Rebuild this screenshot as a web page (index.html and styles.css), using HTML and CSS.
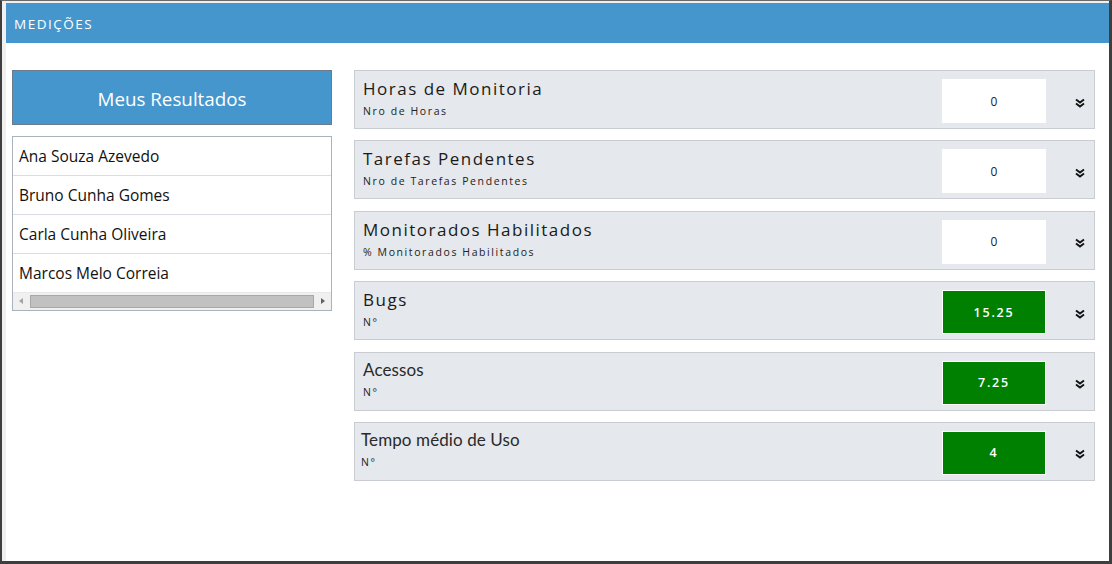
FILE: index.html
```html
<!DOCTYPE html>
<html lang="pt">
<head>
<meta charset="utf-8">
<title>Medições</title>
<link rel="stylesheet" href="styles.css">
</head>
<body>
<div class="window">
  <div class="app">
    <header class="topbar">MEDIÇÕES</header>
    <main class="content">
      <aside class="side">
        <div class="side-title">Meus Resultados</div>
        <div class="list">
          <div class="item">Ana Souza Azevedo</div>
          <div class="item">Bruno Cunha Gomes</div>
          <div class="item">Carla Cunha Oliveira</div>
          <div class="item last">Marcos Melo Correia</div>
          <div class="hscroll">
            <span class="arrow left"></span>
            <span class="track"><span class="thumb"></span></span>
            <span class="arrow right"></span>
          </div>
        </div>
      </aside>
      <section class="cards">
        <div class="card">
          <div class="info"><div class="title">Horas de Monitoria</div><div class="sub">Nro de Horas</div></div>
          <div class="value">0</div>
          <svg class="chev" viewBox="0 0 10 10"><path d="M1 1.5 L5 4.5 L9 1.5 M1 5.5 L5 8.5 L9 5.5"/></svg>
        </div>
        <div class="card">
          <div class="info"><div class="title">Tarefas Pendentes</div><div class="sub">Nro de Tarefas Pendentes</div></div>
          <div class="value">0</div>
          <svg class="chev" viewBox="0 0 10 10"><path d="M1 1.5 L5 4.5 L9 1.5 M1 5.5 L5 8.5 L9 5.5"/></svg>
        </div>
        <div class="card">
          <div class="info"><div class="title">Monitorados Habilitados</div><div class="sub">% Monitorados Habilitados</div></div>
          <div class="value">0</div>
          <svg class="chev" viewBox="0 0 10 10"><path d="M1 1.5 L5 4.5 L9 1.5 M1 5.5 L5 8.5 L9 5.5"/></svg>
        </div>
        <div class="card">
          <div class="info"><div class="title">Bugs</div><div class="sub">N°</div></div>
          <div class="value good">15.25</div>
          <svg class="chev" viewBox="0 0 10 10"><path d="M1 1.5 L5 4.5 L9 1.5 M1 5.5 L5 8.5 L9 5.5"/></svg>
        </div>
        <div class="card">
          <div class="info"><div class="title alt">Acessos</div><div class="sub">N°</div></div>
          <div class="value good">7.25</div>
          <svg class="chev" viewBox="0 0 10 10"><path d="M1 1.5 L5 4.5 L9 1.5 M1 5.5 L5 8.5 L9 5.5"/></svg>
        </div>
        <div class="card">
          <div class="info shift"><div class="title alt">Tempo médio de Uso</div><div class="sub">N°</div></div>
          <div class="value good">4</div>
          <svg class="chev" viewBox="0 0 10 10"><path d="M1 1.5 L5 4.5 L9 1.5 M1 5.5 L5 8.5 L9 5.5"/></svg>
        </div>
      </section>
    </main>
  </div>
</div>
</body>
</html>
```

FILE: styles.css
```css
* { box-sizing: border-box; }
html, body { margin: 0; padding: 0; }
body {
  font-family: "Open Sans", "Noto Sans", sans-serif;
  background: #ffffff;
  width: 1112px;
  height: 564px;
  overflow: hidden;
}
.window {
  width: 1112px;
  height: 564px;
  border-left: 2px solid #3e3e3e;
  border-top: 1px solid #6a6a6a;
  border-right: 3px solid #3e3e3e;
  border-bottom: 3px solid #3e3e3e;
  background: #f0f0f0;
  padding: 2px 0 0 4px;
}
.app {
  background: #ffffff;
  height: 100%;
  display: flex;
  flex-direction: column;
}
.topbar {
  height: 40px;
  background: #4596cd;
  color: #ffffff;
  font-size: 13.5px;
  letter-spacing: 1.5px;
  padding-left: 8px;
  display: flex;
  align-items: center;
  padding-top: 2px;
}
.content {
  display: flex;
  gap: 22px;
  padding: 27px 14px 0 6px;
}
.side { width: 320px; flex: none; }
.side-title {
  height: 55px;
  background: #4596cd;
  border: 1px solid #6b7c8c;
  color: #ffffff;
  font-size: 18.8px;
  display: flex;
  align-items: center;
  justify-content: center;
  padding-top: 2px;
}
.list {
  margin-top: 11px;
  border: 1px solid #a9b3bd;
  background: #ffffff;
}
.item {
  height: 39px;
  border-bottom: 1px solid #d9dde2;
  font-size: 15.5px;
  color: #111111;
  padding-left: 6px;
  display: flex;
  align-items: center;
}
.item.last { border-bottom: 1px solid #e8e8e8; }
.hscroll {
  height: 17px;
  display: flex;
  align-items: center;
  background: #f0f0f0;
}
.arrow { width: 17px; height: 17px; position: relative; flex: none; }
.arrow.left::after, .arrow.right::after {
  content: "";
  position: absolute;
  top: 5px;
  border-top: 3.5px solid transparent;
  border-bottom: 3.5px solid transparent;
}
.arrow.left::after { left: 6px; border-right: 4px solid #a3a3a3; }
.arrow.right::after { left: 7px; border-left: 4px solid #606060; }
.track { flex: 1; height: 17px; display: flex; align-items: center; }
.thumb {
  display: block;
  width: 100%;
  height: 13px;
  background: #c1c1c1;
  border: 1px solid #a8a8a8;
}
.cards {
  flex: 1;
  display: flex;
  flex-direction: column;
  gap: 11.4px;
}
.card {
  height: 59px;
  background: #e5e8ec;
  border: 1px solid #c9cdd1;
  display: flex;
  align-items: center;
  padding-left: 8px;
}
.info { flex: 1; }
.info.shift { margin-left: -2px; }
.title {
  font-size: 17px;
  letter-spacing: 1.5px;
  color: #1a1a1a;
  line-height: 22px;
  margin-top: -2px;
}
.title.alt {
  letter-spacing: 0.1px;
  font-size: 17px;
  font-family: "Lato", sans-serif;
  font-weight: 400;
  color: #2a2a2a;
  margin-top: -3px;
}
.sub {
  font-size: 10.5px;
  letter-spacing: 1.6px;
  color: #222222;
  line-height: 16px;
  margin-top: 3px;
}
.title.alt + .sub { margin-top: 3px; }
.value {
  width: 104px;
  height: 44px;
  background: #ffffff;
  font-size: 12px;
  color: #222222;
  display: flex;
  align-items: center;
  justify-content: center;
  margin-top: 3px;
  flex: none;
}
.value.good {
  background: #008000;
  border: 1px solid #ffffff;
  color: #ffffff;
  font-weight: 600;
  font-size: 12.5px;
  letter-spacing: 1.8px;
}
.chev {
  width: 10px;
  height: 10px;
  margin: 6px 9px 0 29px;
  flex: none;
}
.chev path {
  fill: none;
  stroke: #111111;
  stroke-width: 1.9;
}
```
